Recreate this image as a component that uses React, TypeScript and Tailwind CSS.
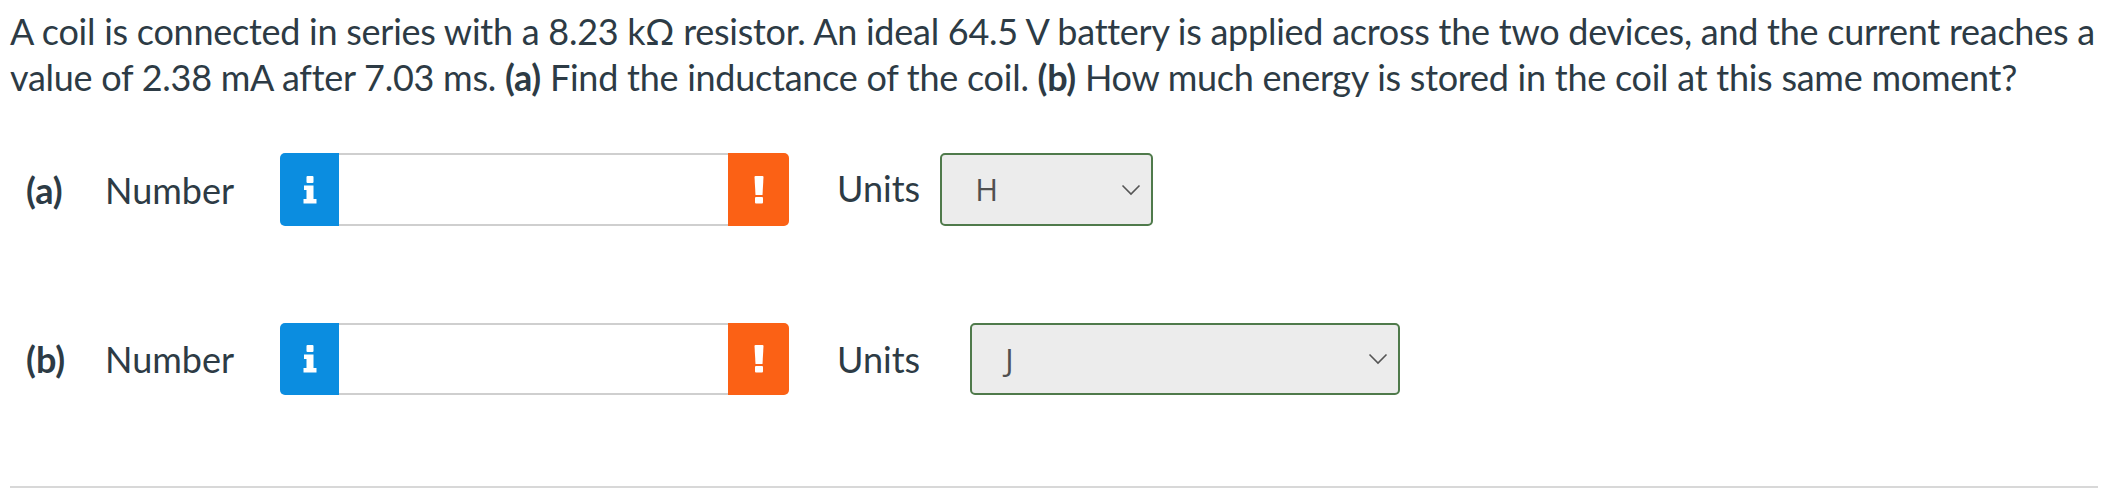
import React from "react";

function InfoIcon() {
  return (
    <svg width="14" height="28" viewBox="0 0 14 28" fill="#ffffff">
      <rect x="3.5" y="0" width="7" height="7" rx="1" />
      <path d="M1 9.5 H10.5 V23 H13.5 V27.5 H0.5 V23 H3.5 V14 H1 Z" />
    </svg>
  );
}

function WarnIcon() {
  return (
    <svg width="10" height="28" viewBox="0 0 10 28" fill="#ffffff">
      <path d="M0.5 1 Q0.5 0 1.5 0 H8.5 Q9.5 0 9.5 1 L8.5 19 H1.5 Z" />
      <rect x="1" y="21" width="8" height="6.5" rx="1" />
    </svg>
  );
}

function Chevron() {
  return (
    <svg width="20" height="12" viewBox="0 0 20 12" fill="none" stroke="#555" strokeWidth="1.6">
      <path d="M1.5 1.5 L10 10 L18.5 1.5" />
    </svg>
  );
}

function NumberField() {
  return (
    <div className="flex h-full">
      <div className="w-[59px] h-full bg-[#0b8de0] rounded-l-[5px] flex items-center justify-center">
        <InfoIcon />
      </div>
      <div className="w-[389px] h-full bg-white border-y-2 border-[#cfcfcf]" />
      <div className="w-[61px] h-full bg-[#fb6115] rounded-r-[5px] flex items-center justify-center">
        <WarnIcon />
      </div>
    </div>
  );
}

function UnitSelect({ value, width }: { value: string; width: string }) {
  return (
    <div
      className={`${width} h-full bg-[#ececec] border-2 border-[#4f7a4b] rounded-[5px] flex items-center justify-between pl-[33px] pr-[10px]`}
    >
      <span className="text-[31px] text-[#505050] font-['Open_Sans',sans-serif] leading-none">{value}</span>
      <Chevron />
    </div>
  );
}

export default function App() {
  return (
    <div className="w-[2108px] h-[492px] bg-white text-[#2d3b45] font-['Lato',sans-serif] px-[10px] pt-[8px] overflow-hidden">
      <p className="text-[36px] leading-[46px] tracking-[-0.26px] whitespace-nowrap">
        A coil is connected in series with a 8.23 kΩ resistor. An ideal 64.5 V battery is applied across the two devices, and the current reaches a
        <br />
        value of 2.38 mA after 7.03 ms. <b>(a)</b> Find the inductance of the coil. <b>(b)</b> How much energy is stored in the coil at this same moment?
      </p>

      <div className="mt-[53px] h-[73px] flex items-center">
        <span className="ml-[16px] w-[79px] text-[36px] font-bold">(a)</span>
        <span className="w-[175px] text-[36px]">Number</span>
        <NumberField />
        <span className="ml-[48px] text-[36px] -mt-[4px]">Units</span>
        <div className="ml-[20px] h-full">
          <UnitSelect value="H" width="w-[213px]" />
        </div>
      </div>

      <div className="mt-[97px] h-[72px] flex items-center">
        <span className="ml-[16px] w-[79px] text-[36px] font-bold">(b)</span>
        <span className="w-[175px] text-[36px]">Number</span>
        <NumberField />
        <span className="ml-[48px] text-[36px]">Units</span>
        <div className="ml-[50px] h-full">
          <UnitSelect value="J" width="w-[430px]" />
        </div>
      </div>

      <div className="mt-[91px] h-[2px] bg-[#d8d8d8]" />
    </div>
  );
}
